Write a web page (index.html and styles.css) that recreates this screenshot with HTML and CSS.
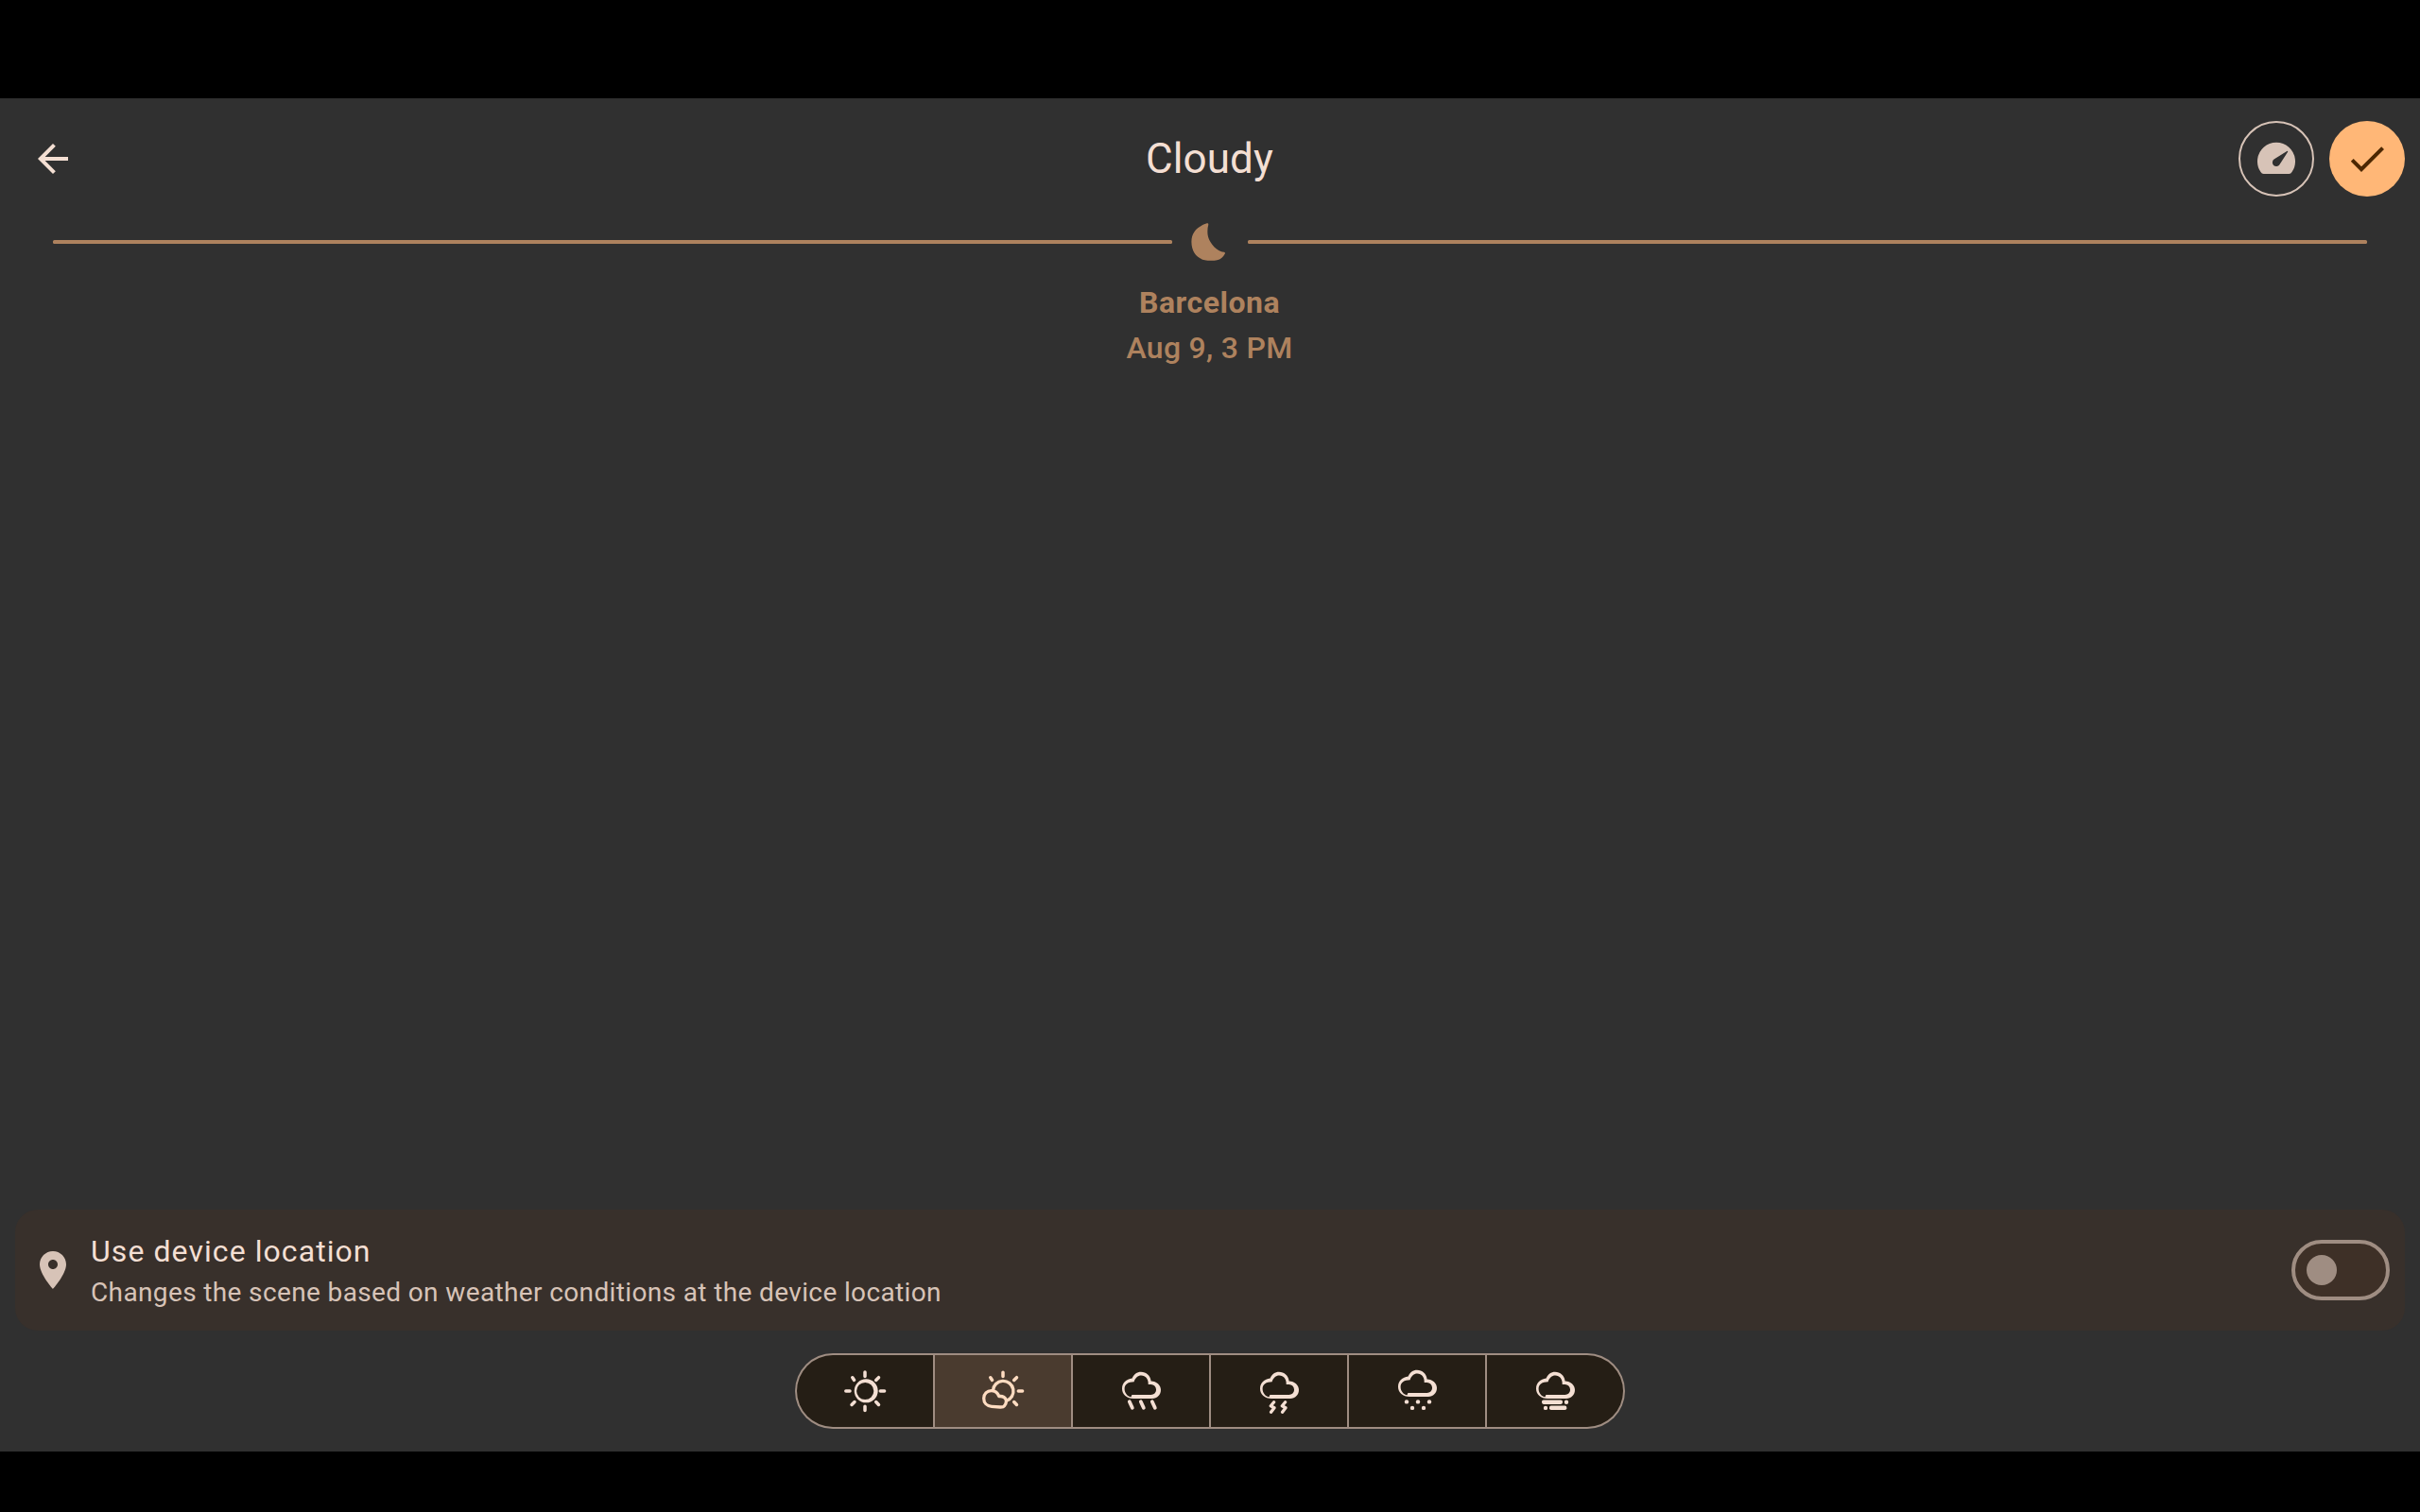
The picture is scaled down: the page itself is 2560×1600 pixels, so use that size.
FILE: index.html
```html
<!DOCTYPE html>
<html lang="en">
<head>
<meta charset="utf-8">
<title>Cloudy</title>
<link rel="stylesheet" href="styles.css">
</head>
<body>
<svg class="defs" width="0" height="0" aria-hidden="true">
  <symbol id="cloud" viewBox="0 0 48 48" overflow="visible">
    <path fill-rule="evenodd" d="M16 32C9 32 4 27.5 4 21.5C4 15.5 8.5 11.2 14.7 10.5C16.3 6.5 19.8 3.8 24 3.8C29.5 3.8 34 7.8 34.6 13.4C40.5 13.7 45 17.6 45 22.8C45 28 41 32 36 32ZM13.5 30.3L14.4 28H34.5C37.8 28 40 25.8 40 22.6C40 19.2 37.5 17.2 34.5 17H31.7C32 11.2 28.7 7.6 24.3 7.6C20.6 7.6 18.2 10 16.6 14.2C10.5 14.2 6.6 17 6.6 21.5C6.6 26 9.5 29.6 13.5 30.3Z"/>
  </symbol>
</svg>
<main class="screen">
  <header class="toolbar">
    <button class="icon-button" aria-label="Back">
      <svg class="icon" viewBox="0 0 24 24"><path d="M20 11H7.83l5.59-5.59L12 4l-8 8 8 8 1.41-1.41L7.83 13H20z"/></svg>
    </button>
    <h1 class="title">Cloudy</h1>
    <div class="actions">
      <button class="round outlined" aria-label="Speed">
        <svg class="icon" viewBox="0 0 48 48"><path fill-rule="evenodd" d="M10.5 40Q8.6 40 7.5 38A20 20 0 1 1 40.5 38Q39.400 40 37.500 40ZM35.200 15.900L21.600 24.600A4.100 4.100 0 1 0 27.400 30.200L36.100 16.800Q36.400 15.300 35.200 15.900Z"/></svg>
      </button>
      <button class="round filled" aria-label="Apply">
        <svg class="icon" viewBox="0 0 24 24"><path d="M9 16.17L4.83 12l-1.42 1.41L9 19 21 7l-1.41-1.41z"/></svg>
      </button>
    </div>
  </header>

  <div class="timeline">
    <span class="track"></span>
    <svg class="moon" viewBox="0 0 36 40"><path d="M16.800 0.300Q18.500 -0.200 18.300 1.800C17.200 6 17 10.500 18 14.500C19.200 19 22.500 24 27 27.500C29.500 29.500 32 30.500 35 30.800Q36.500 31.200 35.700 32.800C34 36 31 38.600 27.500 39.300C24 40 18 40 14.500 39.200C6 37.500 0.400 30 0.400 20C0.400 9.500 7 3.500 16.800 0.300Z"/></svg>
    <span class="track"></span>
  </div>

  <div class="place">
    <strong class="city">Barcelona</strong>
    <span class="time">Aug 9, 3 PM</span>
  </div>

  <section class="card">
    <svg class="icon pin" viewBox="0 0 24 24"><path d="M12 2C8.13 2 5 5.13 5 9c0 5.25 7 13 7 13s7-7.75 7-13c0-3.87-3.130-7-7-7zm0 9.500c-1.380 0-2.500-1.120-2.500-2.500s1.120-2.500 2.500-2.500 2.500 1.120 2.500 2.500-1.120 2.500-2.500 2.500z"/></svg>
    <div class="card-text">
      <span class="card-title">Use device location</span>
      <span class="card-note">Changes the scene based on weather conditions at the device location</span>
    </div>
    <button class="switch" role="switch" aria-checked="false" aria-label="Use device location"><span class="thumb"></span></button>
  </section>

  <nav class="segments">
    <button class="segment" aria-label="Clear">
      <svg class="icon" viewBox="0 0 48 48">
        <path fill-rule="evenodd" d="M12.700 23.800a12.500 12.500 0 0 1 25 0a12.500 12.500 0 0 1-25 0ZM15.100 24a9.100 9.100 0 0 0 18.200 0a9.100 9.100 0 0 0-18.200 0Z"/>
        <path class="ray" d="M24 4V8.500M24 40.300V44.500M3.800 24H8M40.300 24H44.600M10.800 9.800L12.600 12.400M38.500 9.700L35.700 12.500M10 38.500L13 35.500M35.700 35.500L38.500 38.500"/>
      </svg>
    </button>
    <button class="segment selected" aria-label="Cloudy">
      <svg class="icon" viewBox="0 0 48 48">
        <path class="ray" d="M24 4.300V8.500M40.300 24H44.600M10.800 9.800L12.600 12.400M38.500 9.700L35.700 12.500M35.700 35.500L38.500 38.500"/>
        <path class="line" d="M13.400 23.500A10.800 10.800 0 1 1 27.500 34.400"/>
        <path class="line" d="M12 40.300C7 40 3.700 36.500 3.700 31.800C3.700 27 7.200 23.700 11.700 23.700C15.600 23.700 18.500 26 19.700 29.600C23.700 29 27.300 31 27.500 34.500C27.500 37 26.200 38.800 25.400 39.800C24.800 40.700 23.500 41.100 21 41Z"/>
      </svg>
    </button>
    <button class="segment" aria-label="Rain">
      <svg class="icon" viewBox="0 0 48 48">
        <use href="#cloud"/>
        <path class="drop" d="M11.800 35.200L14.800 41.800M23.800 35.200L26.800 41.800M35.800 35.200L38.800 41.800"/>
      </svg>
    </button>
    <button class="segment" aria-label="Thunderstorm">
      <svg class="icon" viewBox="0 0 48 48">
        <use href="#cloud"/>
        <path class="line" d="M18.600 35.800L15.300 39.800L19 41.800L15.600 46.300M30.600 35.800L27.300 39.800L31 41.800L27.600 46.300"/>
      </svg>
    </button>
    <button class="segment" aria-label="Snow">
      <svg class="icon" viewBox="0 0 48 48">
        <use href="#cloud" y="-2"/>
        <circle cx="13" cy="35.400" r="2.200"/><circle cx="25" cy="35.400" r="2.200"/><circle cx="37" cy="35.400" r="2.200"/>
        <circle cx="19" cy="41.900" r="2.200"/><circle cx="31" cy="41.900" r="2.200"/>
      </svg>
    </button>
    <button class="segment" aria-label="Fog">
      <svg class="icon" viewBox="0 0 48 48">
        <use href="#cloud"/>
        <rect x="10" y="33.400" width="22" height="4.500" rx="1.800"/><circle cx="36" cy="35.700" r="2.200"/>
        <circle cx="14" cy="41.900" r="2.200"/><rect x="18" y="39.600" width="18.300" height="4.500" rx="1.800"/>
      </svg>
    </button>
  </nav>
</main>
</body>
</html>
```
FILE: styles.css
```css
* { box-sizing: border-box; }

body {
  margin: 0;
  height: 1600px;
  padding: 104px 0 64px;
  background: #000;
  font-family: Roboto, "Liberation Sans", sans-serif;
}

button {
  padding: 0;
  border: 0;
  background: none;
  color: inherit;
  font: inherit;
  display: flex;
  align-items: center;
  justify-content: center;
}

.defs { display: block; height: 0; }

.screen {
  height: 1432px;
  background: #303030;
  display: flex;
  flex-direction: column;
  color: #f4dfd3;
}

.icon {
  width: 48px;
  height: 48px;
  display: block;
  flex: none;
  fill: currentColor;
}

.toolbar {
  height: 128px;
  padding: 0 16px;
  display: grid;
  grid-template-columns: 1fr auto 1fr;
  align-items: center;
}

.icon-button { width: 80px; height: 80px; }

.title {
  margin: 0;
  padding-right: 1px;
  font-size: 44px;
  font-weight: 400;
  line-height: 56px;
  letter-spacing: 0.1px;
}

.actions {
  display: flex;
  justify-content: flex-end;
  gap: 16px;
}

.round {
  width: 80px;
  height: 80px;
  border-radius: 50%;
}

.outlined { border: 2px solid #d7c3b7; color: #d7c3b7; }
.filled { background: #ffb777; color: #4c2700; }

.timeline {
  height: 48px;
  padding: 0 56px;
  display: flex;
  align-items: center;
}

.track {
  flex: 1;
  height: 4px;
  border-radius: 1.5px;
  background: #ae825e;
}

.moon {
  width: 36px;
  height: 40px;
  margin: 0 24px 0 20px;
  fill: #ae825e;
}

.place {
  padding: 16px 1px 0 0;
  display: flex;
  flex-direction: column;
  align-items: center;
  color: #ae825e;
  font-size: 32px;
  line-height: 48px;
  letter-spacing: 0.3px;
}

.city { font-weight: 700; letter-spacing: 0.5px; }
.time { font-weight: 500; }

.card {
  height: 128px;
  margin: auto 16px 24px;
  padding: 0 16px;
  border-radius: 24px;
  background: #38302b;
  display: flex;
  align-items: center;
}

.pin { color: #d7c3b7; }

.card-text {
  flex: 1;
  padding-left: 16px;
  display: flex;
  flex-direction: column;
}

.card-title {
  font-size: 32px;
  line-height: 48px;
  letter-spacing: 1.07px;
}

.card-note {
  color: #d7c3b7;
  font-size: 28px;
  line-height: 40px;
  letter-spacing: 0.37px;
}

.switch {
  width: 104px;
  height: 64px;
  padding-left: 12px;
  border: 4px solid #9f8d82;
  border-radius: 32px;
  background: #3e3027;
  justify-content: flex-start;
}

.thumb {
  width: 32px;
  height: 32px;
  border-radius: 50%;
  background: #9f8d82;
}

.segments {
  width: 878px;
  margin: 0 auto 24px;
  padding: 2px;
  border-radius: 40px;
  background: #9f8d82;
  display: flex;
  gap: 2px;
}

.segment {
  flex: 1;
  height: 76px;
  background: #251e15;
}

.segment:first-child { border-radius: 38px 0 0 38px; }
.segment:last-child { border-radius: 0 38px 38px 0; }

.selected { background: #4a3b2f; color: #ffdcc1; }

.ray, .line, .drop {
  fill: none;
  stroke: currentColor;
  stroke-linecap: round;
  stroke-linejoin: round;
}

.ray { stroke-width: 3.5; }
.line { stroke-width: 3.3; }
.drop { stroke-width: 3.8; }
```
